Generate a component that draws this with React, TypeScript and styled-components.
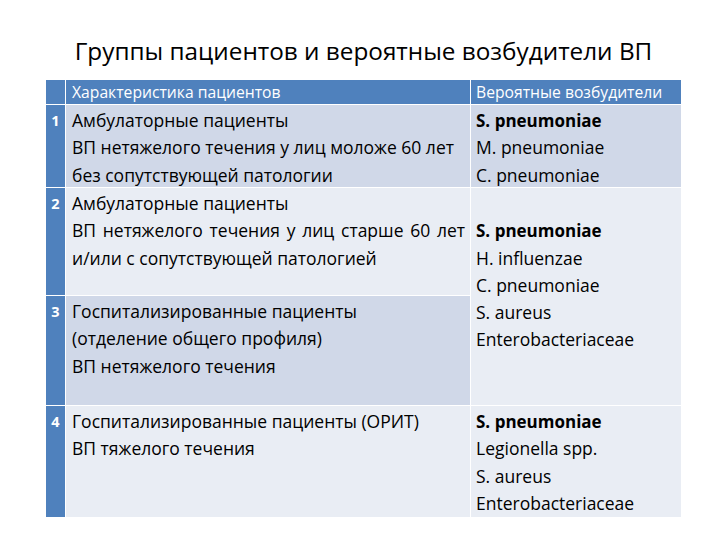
import * as React from 'react'
import styled, { createGlobalStyle } from 'styled-components'

const GlobalStyle = createGlobalStyle`
  html, body {
    margin: 0;
    padding: 0;
    background: #fff;
  }
  body {
    font-family: 'Open Sans', 'Liberation Sans', Arial, sans-serif;
    color: #000;
  }
`

const Slide = styled.div`
  width: 720px;
  height: 540px;
  padding: 34px 39px 0 46px;
  box-sizing: border-box;
  display: flex;
  flex-direction: column;
`

const Title = styled.h1`
  margin: 0 0 13px 0;
  height: 33px;
  font-size: 24.3px;
  font-weight: 400;
  line-height: 33px;
  text-align: center;
`

const Table = styled.div`
  display: grid;
  grid-template-columns: 19px 404px 210px;
  grid-template-rows: 24px 82px 107px 109px 111px;
  column-gap: 1px;
  row-gap: 1px;
  width: 635px;
  background: #fff;
`

const HeadCell = styled.div`
  background: #4f81bd;
  color: #fff;
  font-size: 15.7px;
  line-height: 24px;
  padding: 0 5px;
  white-space: nowrap;
`

const NumCell = styled.div`
  background: #4f81bd;
  color: #fff;
  font-weight: 700;
  font-size: 14.5px;
  line-height: 27.3px;
  padding-top: 2px;
  text-align: center;
  grid-row: ${({ $row }) => $row};
`

const Cell = styled.div`
  background: ${({ $shade }) => ($shade ? '#d0d8e8' : '#e9edf4')};
  font-size: 17.5px;
  line-height: 27.3px;
  padding: 2px 5px 0 ${({ $left }) => $left ?? 5}px;
  grid-row: ${({ $row }) => $row};
  white-space: nowrap;
`

const Line = styled.div`
  height: 27.3px;
  font-weight: ${({ $bold }) => ($bold ? 700 : 400)};
  font-size: ${({ $bold }) => ($bold ? '17px' : 'inherit')};
  text-align: ${({ $justify }) => ($justify ? 'justify' : 'left')};
  text-align-last: ${({ $justify }) => ($justify ? 'justify' : 'auto')};
  white-space: ${({ $justify }) => ($justify ? 'normal' : 'nowrap')};
`

type Item = { text: string; bold?: boolean; justify?: boolean }

const Lines = ({ items }: { items: Item[] }) => (
  <>
    {items.map((it, i) => (
      <Line key={i} $bold={it.bold} $justify={it.justify}>
        {it.text || '\u00a0'}
      </Line>
    ))}
  </>
)

export default function App() {
  return (
    <Slide>
      <GlobalStyle />
      <Title>Группы пациентов и вероятные возбудители ВП</Title>
      <Table>
        <HeadCell />
        <HeadCell style={{ paddingLeft: 6 }}>Характеристика пациентов</HeadCell>
        <HeadCell>Вероятные возбудители</HeadCell>

        <NumCell $row="2">1</NumCell>
        <Cell $row="2" $shade $left={6}>
          <Lines
            items={[
              { text: 'Амбулаторные пациенты' },
              { text: 'ВП нетяжелого течения у лиц моложе 60 лет' },
              { text: 'без сопутствующей патологии' },
            ]}
          />
        </Cell>
        <Cell $row="2" $shade>
          <Lines
            items={[
              { text: 'S. pneumoniae', bold: true },
              { text: 'M. pneumoniae' },
              { text: 'C. pneumoniae' },
            ]}
          />
        </Cell>

        <NumCell $row="3">2</NumCell>
        <Cell $row="3" $left={6}>
          <Lines
            items={[
              { text: 'Амбулаторные пациенты' },
              { text: 'ВП нетяжелого течения у лиц старше 60 лет', justify: true },
              { text: 'и/или с сопутствующей патологией' },
            ]}
          />
        </Cell>
        <Cell $row="3 / span 2">
          <Lines
            items={[
              { text: '' },
              { text: 'S. pneumoniae', bold: true },
              { text: 'H. influenzae' },
              { text: 'C. pneumoniae' },
              { text: 'S. aureus' },
              { text: 'Enterobacteriaceae' },
            ]}
          />
        </Cell>

        <NumCell $row="4">3</NumCell>
        <Cell $row="4" $shade $left={6}>
          <Lines
            items={[
              { text: 'Госпитализированные пациенты' },
              { text: '(отделение общего профиля)' },
              { text: 'ВП нетяжелого течения' },
            ]}
          />
        </Cell>

        <NumCell $row="5">4</NumCell>
        <Cell $row="5" $left={6}>
          <Lines
            items={[
              { text: 'Госпитализированные пациенты (ОРИТ)' },
              { text: 'ВП тяжелого течения' },
            ]}
          />
        </Cell>
        <Cell $row="5">
          <Lines
            items={[
              { text: 'S. pneumoniae', bold: true },
              { text: 'Legionella spp.' },
              { text: 'S. aureus' },
              { text: 'Enterobacteriaceae' },
            ]}
          />
        </Cell>
      </Table>
    </Slide>
  )
}
